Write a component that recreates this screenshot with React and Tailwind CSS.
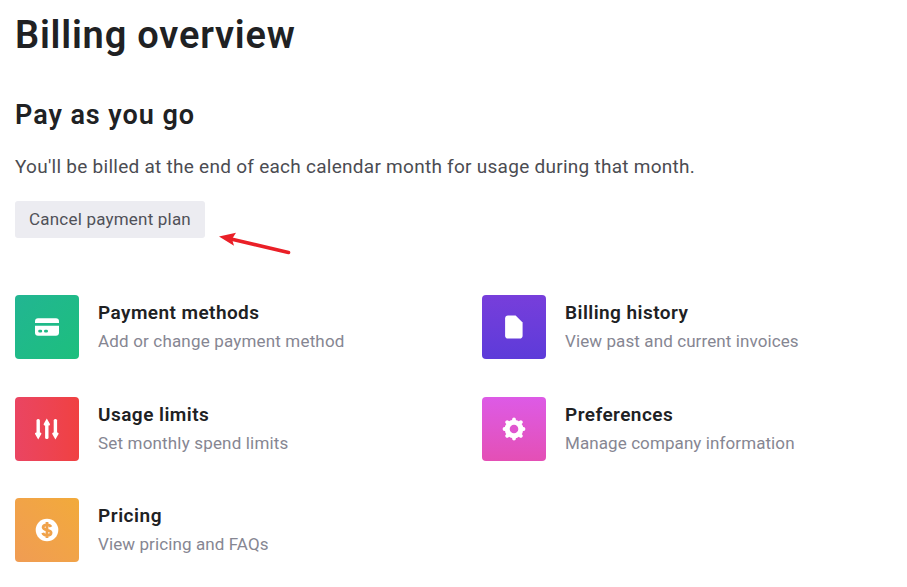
import React from "react";

const CardIcon = () => (
  <svg width="24" height="18" viewBox="0 0 24 18" fill="none">
    <path d="M0 5V3.2C0 1.4 1.2.3 3 .3H21C22.8.3 24 1.400 24 3.200V5z" fill="#fff" />
    <path
      fillRule="evenodd"
      d="M0 7.800h24v7c0 1.800-1.200 2.900-3 2.900H3c-1.800 0-3-1.100-3-2.900zM4.600 11.800a1.400 1.400 0 0 0 0 2.800h1.200a1.400 1.400 0 0 0 0-2.800zM10.400 11.800a1.400 1.400 0 0 0 0 2.800H11.600a1.400 1.400 0 0 0 0-2.800z"
      fill="#fff"
    />
  </svg>
);

const LimitsIcon = () => (
  <svg width="24" height="22" viewBox="0 0 24 22" fill="#fff">
    <rect x="1.500" y="1" width="3.400" height="17" rx="1.500" />
    <path d="M3.200 21.600 .2 16.300a1.200 1.200 0 0 1 1-1.800h4a1.200 1.200 0 0 1 1 1.800z" />
    <rect x="10.100" y="4" width="3.400" height="17" rx="1.500" />
    <path d="M11.800.4l3 5.300a1.200 1.200 0 0 1-1 1.800h-4a1.200 1.200 0 0 1-1-1.800z" />
    <rect x="18.700" y="1" width="3.400" height="17" rx="1.500" />
    <path d="M20.400 21.600l-3-5.300a1.200 1.200 0 0 1 1-1.800h4a1.200 1.200 0 0 1 1 1.800z" />
  </svg>
);

const PriceIcon = () => (
  <svg width="24" height="24" viewBox="0 0 24 24" fill="none">
    <circle cx="12" cy="12" r="11.300" fill="#fff" />
    <path
      d="M16 8.900C15.400 7.500 13.900 6.800 12 6.800c-2.300 0-3.900 1-3.900 2.500 0 3.700 8 1.700 8 5.400 0 1.600-1.700 2.600-4.100 2.600-2.200 0-3.800-.9-4.300-2.400M12 4v16"
      stroke="#f0a24a"
      strokeWidth="2.800"
    />
  </svg>
);

const FileIcon = () => (
  <svg width="18" height="24" viewBox="0 0 18 24" fill="#fff">
    <path d="M3 .5h7.600L17.600 7.500v13.200c0 1.800-1.100 2.900-2.900 2.900H3c-1.800 0-2.900-1.100-2.900-2.900V3.400C.1 1.600 1.200.5 3 .5z" />
  </svg>
);

const GearIcon = () => (
  <svg width="24" height="24" viewBox="0 0 24 24" fill="none">
    <circle cx="12" cy="12" r="9.300" fill="#fff" />
    <path
      d="M12 2.500v19M2.500 12h19M5.200 5.200l13.600 13.600M18.800 5.200L5.200 18.800"
      stroke="#fff"
      strokeWidth="3.800"
      strokeLinecap="round"
    />
    <circle cx="12" cy="12" r="4.300" fill="#e056cf" />
  </svg>
);

const items = [
  {
    title: "Payment methods",
    text: "Add or change payment method",
    icon: CardIcon,
    color: "bg-linear-to-br from-[#22b592] to-[#1dbf7d]",
    titleSpacing: "tracking-[0.43px]",
    textSpacing: "tracking-[0.17px]",
  },
  {
    title: "Billing history",
    text: "View past and current invoices",
    icon: FileIcon,
    color: "bg-linear-to-b from-[#773edb] to-[#5d3bd9]",
    titleSpacing: "tracking-[0.45px]",
    textSpacing: "tracking-[0.1px]",
  },
  {
    title: "Usage limits",
    text: "Set monthly spend limits",
    icon: LimitsIcon,
    color: "bg-linear-to-r from-[#ea4562] to-[#f04141]",
    titleSpacing: "tracking-[0.47px]",
    textSpacing: "tracking-[0.17px]",
  },
  {
    title: "Preferences",
    text: "Manage company information",
    icon: GearIcon,
    color: "bg-linear-to-b from-[#dd5ae6] to-[#e44fb5]",
    titleSpacing: "tracking-[0.45px]",
    textSpacing: "tracking-[0.09px]",
  },
  {
    title: "Pricing",
    text: "View pricing and FAQs",
    icon: PriceIcon,
    color: "bg-linear-to-tr from-[#f09c53] to-[#f2aa3a]",
    titleSpacing: "tracking-[0.55px]",
    textSpacing: "tracking-[0.1px]",
  },
];

const BillingItem = ({ item }) => {
  const Icon = item.icon;
  return (
    <a href="#" className="flex h-16 items-center">
      <div
        className={`flex h-16 w-16 shrink-0 items-center justify-center rounded ${item.color}`}
      >
        <Icon />
      </div>
      <div className="ml-[19px] whitespace-nowrap">
        <h3
          className={`text-[19px] leading-7 font-semibold text-[#202123] ${item.titleSpacing}`}
        >
          {item.title}
        </h3>
        <p className={`text-[17px] leading-7 text-[#868692] ${item.textSpacing}`}>
          {item.text}
        </p>
      </div>
    </a>
  );
};

const App = () => {
  return (
    <main className="h-[587px] w-full overflow-hidden bg-white pl-[15px] font-['Roboto',sans-serif]">
      <h1 className="pt-[13px] text-[38px] leading-[44px] font-semibold tracking-[0.8px] text-[#202123]">
        Billing overview
      </h1>
      <h2 className="mt-[42px] text-[27px] leading-8 font-semibold tracking-[0.95px] text-[#202123]">
        Pay as you go
      </h2>
      <p className="mt-[22px] text-[19px] leading-7 tracking-[0.27px] whitespace-nowrap text-[#4b4c52]">
        You'll be billed at the end of each calendar month for usage during that month.
      </p>

      <div className="mt-5 flex">
        <button
          type="button"
          className="h-[37px] w-[190px] rounded-[3px] bg-[#ececf1] text-[17px] tracking-[0.2px] whitespace-nowrap text-[#505158]"
        >
          Cancel payment plan
        </button>
        {/* Arrow pointing at the cancel button */}
        <svg className="mt-[30px] ml-3" width="76" height="26" viewBox="0 0 76 26">
          <path d="M14 8L71.500 21.500" stroke="#ea1f27" strokeWidth="3.600" strokeLinecap="round" />
          <path d="M2 5.500L19 1.800 15 8 17 14.800z" fill="#ea1f27" />
        </svg>
      </div>

      <div className="mt-[38px] grid grid-cols-[467px_1fr] gap-y-[37.5px]">
        {items.map((item) => (
          <BillingItem key={item.title} item={item} />
        ))}
      </div>
    </main>
  );
};

export default App;
